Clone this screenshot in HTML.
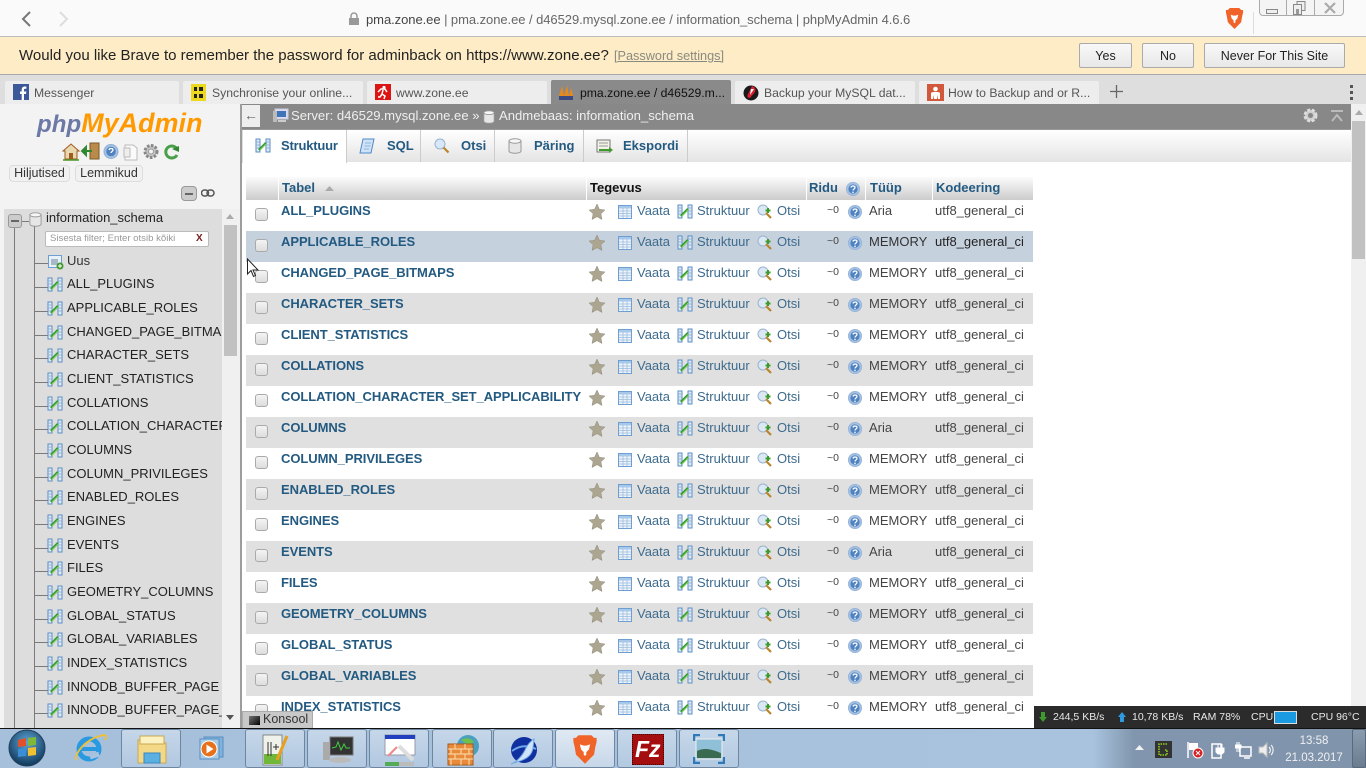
<!DOCTYPE html>
<html><head><meta charset="utf-8"><title>phpMyAdmin</title>
<style>
html,body{margin:0;padding:0;width:1366px;height:768px;overflow:hidden;background:#fff;font-family:"Liberation Sans",sans-serif;font-size:13px;color:#444}
div,span,a,svg{position:absolute;white-space:nowrap;box-sizing:border-box}
.tab{top:81px;height:23px;background:#ededed;border-radius:2px 2px 0 0;color:#555;font-size:12.2px;line-height:23px}
.tab span{left:29px;top:0}
.tab svg{left:8px;top:3px}
.btn{top:43px;height:25px;border:1px solid #aaa;border-radius:2px;background:linear-gradient(#f8f8f8,#e8e8e8);text-align:center;line-height:24px;font-size:12.5px;color:#222}
.nav{left:67px;color:#222;font-size:13px;line-height:16px;width:155px;overflow:hidden;height:17px;margin-top:1px}
.mt{top:130px;height:32px;color:#235a81;font-weight:bold;font-size:13px;line-height:32px;border-right:1px solid #ccc}
.mt span{top:0}
.mt svg{top:8px}
.h{top:177px;height:23px;background:linear-gradient(#fbfbfb,#ccc);color:#235a81;font-weight:bold;line-height:21px;font-size:13px}
.r{left:246px;width:787px;height:31px;overflow:hidden}
.o{background:#e0e0e0}
.n{left:35px;top:2px;color:#235a81;font-weight:bold;font-size:13px;letter-spacing:-.06px;line-height:17px}
.a{top:2px;color:#3d6b8d;line-height:17px;font-size:13px;}
.g{top:2px;color:#444;line-height:17px;font-size:13px}
.ck{left:9px;top:8px;width:13px;height:13px;border:1px solid #aaa;border-radius:3px;background:linear-gradient(#f4f4f4,#ddd)}
.bar{top:729px;height:39px;width:60px;border:1px solid #6f86a0;border-radius:3px;background:linear-gradient(rgba(255,255,255,.35),rgba(255,255,255,.12))}
.bar svg{left:14px;top:4px}
.st{top:711px;color:#e8e8e8;font-size:10.5px;line-height:13px}
.ln{background:#7a7a7a}
</style></head><body>
<svg width="0" height="0" style="left:0;top:0">
<defs>
<symbol id="str" viewBox="0 0 16 16"><path d="M1 1h4v13H1zM11 1h4v13h-4z" fill="#dfeaf6" stroke="#5b8fc6"/><path d="M1 4h4M1 7h4M1 10h4M11 4h4M11 7h4M11 10h4" stroke="#8fb2d8"/><path d="M4 12l7-7" stroke="#2e9a2e" stroke-width="2.4"/><path d="M5 12l6-6" stroke="#8ad05a" stroke-width="1"/></symbol>
<symbol id="star" viewBox="0 0 16 16"><path d="M8 0l2.4 5.3 5.6.7-4.1 3.8 1.1 5.7L8 12.7 3 15.500l1.100-5.700L0 6l5.600-.7z" fill="#aca691" stroke="#8f8a78" stroke-width=".5"/></symbol>
<symbol id="tbl" viewBox="0 0 14 14"><rect x=".5" y=".5" width="13" height="13" fill="#eef4fb" stroke="#6f9fd2"/><rect x="1" y="1" width="12" height="2.500" fill="#a8c8ea"/><path d="M1 6h12M1 8.500h12M1 11h12M5 3v10M9 3v10" stroke="#9dbcdc" stroke-width=".8"/></symbol>
<symbol id="srch" viewBox="0 0 16 16"><circle cx="6" cy="6" r="5" fill="#dce9f5" stroke="#99b3cc"/><path d="M9 9l5 5" stroke="#b8862f" stroke-width="2.200"/><path d="M8.500 6.500h5M11 4v5" stroke="#3f9a2e" stroke-width="2"/></symbol>
<symbol id="help" viewBox="0 0 14 14"><circle cx="7" cy="7" r="6.700" fill="#a5c0e0" stroke="#8fb0d8" stroke-width=".6"/><circle cx="7" cy="7" r="4.600" fill="#4f82c0"/><path d="M5 5.500c.3-2 4-2 4 0 0 1.500-2 1.500-2 3" fill="none" stroke="#fff" stroke-width="1.300"/><circle cx="7" cy="10.300" r=".8" fill="#fff"/></symbol>
<symbol id="db" viewBox="0 0 14 16"><path d="M1 3v10c0 3 12 3 12 0V3z" fill="#e6e6e6" stroke="#999"/><ellipse cx="7" cy="3" rx="6" ry="2.200" fill="#f7f7f7" stroke="#999"/></symbol>
<symbol id="brave" viewBox="0 0 20 24"><path d="M5 1h10l2 2 2 0 0 3-1 4-1 6-7 7-7-7-1-6-1-4 0-3 2 0z" fill="#f0642a"/><path d="M6 8l3 1h2l3-1-1 4-2 2v2l-1 1-1-1v-2l-2-2z" fill="#fff"/></symbol>
</defs></svg>

<!-- browser top -->
<div style="left:0;top:0;width:1366px;height:36px;background:#fafafa"></div>
<div style="left:0;top:36px;width:1366px;height:1px;background:#bbb"></div>
<svg style="left:19px;top:10px" width="14" height="18"><path d="M11 2L4 9l7 7" fill="none" stroke="#777" stroke-width="2"/></svg>
<svg style="left:57px;top:10px" width="14" height="18"><path d="M3 2l7 7-7 7" fill="none" stroke="#ddd" stroke-width="2"/></svg>
<svg style="left:348px;top:12px" width="12" height="14"><path d="M3 6V4a3 3 0 016 0v2" fill="none" stroke="#999" stroke-width="1.500"/><rect x="1" y="6" width="10" height="7" fill="#999"/></svg>
<div style="left:366px;top:12px;font-size:13px;line-height:16px;color:#666;letter-spacing:-.06px"><span style="position:static;color:#444">pma.zone.ee</span> | pma.zone.ee / d46529.mysql.zone.ee / information_schema | phpMyAdmin 4.6.6</div>
<svg style="left:1225px;top:7px" width="19" height="23"><use href="#brave"/></svg>
<div style="left:1253px;top:12px;width:1px;height:22px;background:#ddd"></div>
<div style="left:1259px;top:-2px;width:85px;height:18px;border:1px solid #aaa;border-radius:0 0 4px 4px;background:#f4f4f4"></div>
<div style="left:1286px;top:0;width:1px;height:16px;background:#aaa"></div>
<div style="left:1314px;top:0;width:1px;height:16px;background:#aaa"></div>
<div style="left:1266px;top:9px;width:12px;height:5px;border:1px solid #888;background:#eee"></div>
<svg style="left:1292px;top:1px" width="16" height="14"><rect x="5" y=".5" width="8" height="9" fill="#eee" stroke="#888"/><rect x="1.500" y="3.500" width="8" height="10" fill="#eee" stroke="#888"/><rect x="4" y="8" width="3" height="5" fill="#999"/></svg>
<svg style="left:1323px;top:2px" width="14" height="12"><path d="M2 1l10 10M12 1L2 11" stroke="#aaa" stroke-width="2.200"/></svg>

<!-- infobar -->
<div style="left:0;top:37px;width:1366px;height:37px;background:#fdecc6"></div>
<div style="left:0;top:74px;width:1366px;height:1px;background:#a9a9a9"></div>
<div style="left:19px;top:47px;font-size:15.03px;line-height:18px;color:#222">Would you like Brave to remember the password for adminback on https://www.zone.ee?</div>
<div style="left:614px;top:48px;font-size:12.7px;line-height:17px;color:#8a8a80;text-decoration:underline">[Password settings]</div>
<div class="btn" style="left:1079px;width:53px">Yes</div>
<div class="btn" style="left:1142px;width:52px">No</div>
<div class="btn" style="left:1204px;width:141px">Never For This Site</div>

<!-- tabs -->
<div style="left:0;top:75px;width:1366px;height:29px;background:#dedede"></div>
<div class="tab" style="left:5px;width:174px"><svg width="16" height="16"><rect width="16" height="16" fill="#3b5998"/><path d="M11 16V10h2l.3-2.500H11V6c0-.8.3-1.200 1.200-1.200h1.200V2.600C13 2.500 12.400 2.500 11.800 2.500 10 2.500 8.700 3.600 8.700 5.700v1.800H7V10h1.700v6z" fill="#fff"/></svg><span style="top:1px">Messenger</span></div>
<div class="tab" style="left:183px;width:180px"><svg width="16" height="18"><rect width="15" height="17" fill="#ecd81c"/><path d="M3 3h3v4H3zM8 3h4v4H8zM3 10h3v4H3zM8 10h4v4H8z" fill="#222"/></svg><span style="top:1px">Synchronise your online...</span></div>
<div class="tab" style="left:367px;width:180px"><svg width="16" height="16"><rect width="16" height="16" fill="#dc1414"/><circle cx="9" cy="3.500" r="1.600" fill="#fff"/><path d="M3 8l3-3h4l2 3M8 6l-1 4 3 2-1 3M7 10l-2 3H3" fill="none" stroke="#fff" stroke-width="1.500"/></svg><span style="top:1px">www.zone.ee</span></div>
<div style="left:551px;top:80px;width:180px;height:24px;background:#8a8a8a;border-radius:2px 2px 0 0"></div>
<svg style="left:558px;top:84px" width="16" height="16"><path d="M1 12L4 2l2 10zM6 12l3-11 2 11zM11 12l2-8 2 8z" fill="#e8891b"/><rect x="1" y="12" width="14" height="4" fill="#3b4a80"/></svg>
<div style="left:580px;top:85px;font-size:12.2px;line-height:17px;color:#111">pma.zone.ee / d46529.m...</div>
<div class="tab" style="left:735px;width:180px"><svg width="16" height="18"><circle cx="8" cy="9" r="7.500" fill="#1a1a1a"/><path d="M9 2c3 1 4 3 3 6l-5 6c-3 0-3-2-2-4z" fill="#d8202c"/><path d="M8 5l3 0-4 6z" fill="#fff"/></svg><span style="top:1px">Backup your MySQL dat...</span></div>
<div class="tab" style="left:919px;width:180px"><svg width="17" height="17"><rect width="17" height="17" fill="#d2583c"/><circle cx="8.500" cy="5" r="2.300" fill="#fff"/><path d="M4 15V9.500C4 8 6 8 8.500 8s4.500 0 4.500 1.500V15h-2v-4l-1 4H7l-1-4v4z" fill="#fff"/></svg><span style="top:1px">How to Backup and or R...</span></div>
<svg style="left:1110px;top:85px" width="13" height="13"><path d="M6.500 0v13M0 6.500h13" stroke="#666" stroke-width="1.300"/></svg>
<div style="left:1350px;top:85px;width:3px;height:3px;background:#555"></div>
<div style="left:1350px;top:91px;width:3px;height:3px;background:#555"></div>
<div style="left:1350px;top:97px;width:3px;height:3px;background:#555"></div>

<!-- sidebar -->
<div style="left:0;top:104px;width:241px;height:624px;background:#f3f3f3"></div>
<div style="left:240px;top:104px;width:2px;height:624px;background:#9d9d9d"></div>
<div style="left:37px;top:105px;font-family:'Liberation Sans',sans-serif;font-weight:bold;font-style:italic;font-size:26.8px;line-height:36px;letter-spacing:.1px;color:#ff9900"><span style="position:static;color:#6c78a5;font-size:24px">php</span>MyAdmin</div>
<svg style="left:62px;top:142px" width="120" height="19">
<path d="M1 9l8-7 8 7h-2v8H3V9z" fill="#e8d8b0" stroke="#a05a20"/><rect x="7" y="11" width="4" height="6" fill="#a05a20"/><path d="M1 18h16" stroke="#4a9a2a" stroke-width="1.500"/>
<rect x="28" y="1" width="9" height="16" fill="#b98a4a" stroke="#7a5a2a"/><path d="M21 9h9M24 5v8l-4-4z" stroke="#2f8a2f" stroke-width="2"/>
<circle cx="49" cy="9.500" r="7" fill="#a5c0e0" stroke="#8fb0d8"/><circle cx="49" cy="9.500" r="4.800" fill="#4f82c0"/><path d="M47 8c.3-2 4-2 4 0 0 1.500-2 1.500-2 3" fill="none" stroke="#fff" stroke-width="1.300"/>
<path d="M63 3h8l4 3v12H63z" fill="#fafafa" stroke="#bbb"/><rect x="62" y="6" width="6" height="9" fill="#eee" stroke="#bbb"/>
<circle cx="89" cy="9.500" r="6" fill="#c4c4c4" stroke="#888" stroke-width="3" stroke-dasharray="2.500 1.500"/><circle cx="89" cy="9.500" r="2.500" fill="#f3f3f3" stroke="#999"/>
<path d="M115 7a6 6 0 10 0 6" fill="none" stroke="#4aa04a" stroke-width="3"/><path d="M110 7l7-3 0 6z" fill="#2f8a2f"/>
</svg>
<div style="left:9px;top:165px;width:61px;height:17px;border:1px solid #ddd;border-radius:4px;background:#f1f1f1;color:#333;font-size:12.500px;line-height:15px;text-align:center">Hiljutised</div>
<div style="left:75px;top:165px;width:68px;height:17px;border:1px solid #ddd;border-radius:4px;background:#f1f1f1;color:#333;font-size:12.500px;line-height:15px;text-align:center">Lemmikud</div>
<div style="left:181px;top:186px;width:16px;height:15px;border:1px solid #999;border-radius:4px;background:#ccc"></div>
<div style="left:185px;top:193px;width:8px;height:2px;background:#666"></div>
<svg style="left:201px;top:189px" width="14" height="9"><rect x=".5" y="1" width="7" height="6" rx="3" fill="none" stroke="#555" stroke-width="1.500"/><rect x="6" y="1" width="7" height="6" rx="3" fill="none" stroke="#555" stroke-width="1.500"/></svg>

<!-- tree -->
<div style="left:4px;top:209px;width:218px;height:519px;background:#dddddd;overflow:hidden"></div>
<div class="ln" style="left:14px;top:226px;width:1px;height:502px"></div>
<div class="ln" style="left:34px;top:226px;width:1px;height:502px"></div>
<div style="left:8px;top:214px;width:14px;height:14px;border:1px solid #999;border-radius:3px;background:#ccc"></div>
<div style="left:11px;top:220px;width:8px;height:2px;background:#666"></div>
<div class="ln" style="left:22px;top:221px;width:7px;height:1px"></div>
<svg style="left:29px;top:212px" width="13" height="15"><use href="#db"/></svg>
<div style="left:46px;top:209px;color:#222;font-size:13px;line-height:17px">information_schema</div>
<div style="left:45px;top:231px;width:164px;height:16px;background:#fff;border:1px solid #bbb;border-radius:2px"></div>
<div style="left:50px;top:232px;font-size:9.6px;line-height:14px;color:#999">Sisesta filter; Enter otsib kõiki</div>
<div style="left:196px;top:232px;font-size:10px;line-height:14px;color:#7a1a1a;font-weight:bold">X</div>
<div class="ln" style="left:35px;top:263px;width:13px;height:1px"></div>
<svg style="left:48px;top:254px" width="16" height="16"><rect x=".5" y="1.500" width="13" height="12" fill="#e8f0f8" stroke="#6f9fd2"/><rect x="3" y="5" width="7" height="6" fill="#a8b8c8"/><circle cx="12" cy="12" r="3.500" fill="#3f9a2e"/><path d="M10 12h4M12 10v4" stroke="#fff"/></svg>
<div class="nav" style="top:252px;color:#333">Uus</div>

<div class="ln" style="left:35px;top:287px;width:13px;height:1px"></div><svg style="left:47px;top:277px" width="16" height="16"><use href="#str"/></svg><div class="nav" style="top:275px">ALL_PLUGINS</div>
<div class="ln" style="left:35px;top:311px;width:13px;height:1px"></div><svg style="left:47px;top:301px" width="16" height="16"><use href="#str"/></svg><div class="nav" style="top:299px">APPLICABLE_ROLES</div>
<div class="ln" style="left:35px;top:335px;width:13px;height:1px"></div><svg style="left:47px;top:325px" width="16" height="16"><use href="#str"/></svg><div class="nav" style="top:323px">CHANGED_PAGE_BITMAPS</div>
<div class="ln" style="left:35px;top:358px;width:13px;height:1px"></div><svg style="left:47px;top:348px" width="16" height="16"><use href="#str"/></svg><div class="nav" style="top:346px">CHARACTER_SETS</div>
<div class="ln" style="left:35px;top:382px;width:13px;height:1px"></div><svg style="left:47px;top:372px" width="16" height="16"><use href="#str"/></svg><div class="nav" style="top:370px">CLIENT_STATISTICS</div>
<div class="ln" style="left:35px;top:406px;width:13px;height:1px"></div><svg style="left:47px;top:396px" width="16" height="16"><use href="#str"/></svg><div class="nav" style="top:394px">COLLATIONS</div>
<div class="ln" style="left:35px;top:429px;width:13px;height:1px"></div><svg style="left:47px;top:419px" width="16" height="16"><use href="#str"/></svg><div class="nav" style="top:417px">COLLATION_CHARACTER_SET</div>
<div class="ln" style="left:35px;top:453px;width:13px;height:1px"></div><svg style="left:47px;top:443px" width="16" height="16"><use href="#str"/></svg><div class="nav" style="top:441px">COLUMNS</div>
<div class="ln" style="left:35px;top:477px;width:13px;height:1px"></div><svg style="left:47px;top:467px" width="16" height="16"><use href="#str"/></svg><div class="nav" style="top:465px">COLUMN_PRIVILEGES</div>
<div class="ln" style="left:35px;top:500px;width:13px;height:1px"></div><svg style="left:47px;top:490px" width="16" height="16"><use href="#str"/></svg><div class="nav" style="top:488px">ENABLED_ROLES</div>
<div class="ln" style="left:35px;top:524px;width:13px;height:1px"></div><svg style="left:47px;top:514px" width="16" height="16"><use href="#str"/></svg><div class="nav" style="top:512px">ENGINES</div>
<div class="ln" style="left:35px;top:548px;width:13px;height:1px"></div><svg style="left:47px;top:538px" width="16" height="16"><use href="#str"/></svg><div class="nav" style="top:536px">EVENTS</div>
<div class="ln" style="left:35px;top:571px;width:13px;height:1px"></div><svg style="left:47px;top:561px" width="16" height="16"><use href="#str"/></svg><div class="nav" style="top:559px">FILES</div>
<div class="ln" style="left:35px;top:595px;width:13px;height:1px"></div><svg style="left:47px;top:585px" width="16" height="16"><use href="#str"/></svg><div class="nav" style="top:583px">GEOMETRY_COLUMNS</div>
<div class="ln" style="left:35px;top:619px;width:13px;height:1px"></div><svg style="left:47px;top:609px" width="16" height="16"><use href="#str"/></svg><div class="nav" style="top:607px">GLOBAL_STATUS</div>
<div class="ln" style="left:35px;top:642px;width:13px;height:1px"></div><svg style="left:47px;top:632px" width="16" height="16"><use href="#str"/></svg><div class="nav" style="top:630px">GLOBAL_VARIABLES</div>
<div class="ln" style="left:35px;top:666px;width:13px;height:1px"></div><svg style="left:47px;top:656px" width="16" height="16"><use href="#str"/></svg><div class="nav" style="top:654px">INDEX_STATISTICS</div>
<div class="ln" style="left:35px;top:690px;width:13px;height:1px"></div><svg style="left:47px;top:680px" width="16" height="16"><use href="#str"/></svg><div class="nav" style="top:678px">INNODB_BUFFER_PAGE</div>
<div class="ln" style="left:35px;top:713px;width:13px;height:1px"></div><svg style="left:47px;top:703px" width="16" height="16"><use href="#str"/></svg><div class="nav" style="top:701px">INNODB_BUFFER_PAGE_LRU</div>

<div style="left:222px;top:209px;width:18px;height:519px;background:#f0f0f0"></div>
<div style="left:224px;top:225px;width:13px;height:131px;background:#c1c1c1"></div>
<svg style="left:225px;top:214px" width="10" height="6"><path d="M5 0l4 5H1z" fill="#aaa"/></svg>
<svg style="left:225px;top:715px" width="10" height="6"><path d="M5 5L1 0h8z" fill="#555"/></svg>

<!-- top breadcrumb -->
<div style="left:242px;top:104px;width:1109px;height:26px;background:#888;border-bottom:1px solid #999"></div>
<div style="left:242px;top:105px;width:18px;height:22px;background:#eee;color:#666;font-size:14px;line-height:21px;text-align:center">←</div>
<svg style="left:273px;top:108px" width="16" height="15"><rect x="2" y="1" width="13" height="10" fill="#dde" stroke="#ccd"/><rect x="4" y="3" width="9" height="6" fill="#3f74b8"/><rect x="0" y="3" width="4" height="11" fill="#bbb"/><rect x="5" y="12" width="8" height="2" fill="#ccc"/></svg>
<div style="left:291px;top:108px;color:#efefef;font-size:13.1px;line-height:16px">Server: d46529.mysql.zone.ee »</div>
<svg style="left:483px;top:110px" width="12" height="14"><use href="#db"/></svg>
<div style="left:499px;top:108px;color:#efefef;font-size:13.1px;line-height:16px">Andmebaas: information_schema</div>
<svg style="left:1302px;top:107px" width="17" height="17"><circle cx="8.500" cy="8.500" r="5.500" fill="#ccc" stroke="#ddd" stroke-width="3" stroke-dasharray="3 1.500"/><circle cx="8.500" cy="8.500" r="2.500" fill="#888"/></svg>
<svg style="left:1330px;top:110px" width="14" height="12"><path d="M1 1h12" stroke="#bbb" stroke-width="2"/><path d="M2 11l5-6 5 6" fill="none" stroke="#bbb" stroke-width="2"/></svg>

<!-- menu -->
<div style="left:242px;top:130px;width:1109px;height:32px;background:linear-gradient(#fff,#e4e4e4)"></div>
<div class="mt" style="left:242px;width:105px;height:33px;background:#fff;border-left:1px solid #ddd"><svg style="left:12px" width="16" height="16"><use href="#str"/></svg><span style="left:38px;letter-spacing:-.2px">Struktuur</span></div>
<div class="mt" style="left:347px;width:74px"><svg style="left:12px" width="16" height="16"><path d="M4 1h11l-3 14H1z" fill="#cfe2f6" stroke="#4f8ac6"/><path d="M6 5h6M5.500 8h6M5 11h5" stroke="#8fb6de"/></svg><span style="left:40px">SQL</span></div>
<div class="mt" style="left:421px;width:74px"><svg style="left:13px" width="16" height="16"><circle cx="6" cy="6" r="5" fill="#d8e8f8" stroke="#99b3cc"/><path d="M9.500 9.500l5 5" stroke="#b8862f" stroke-width="2.200"/></svg><span style="left:40px">Otsi</span></div>
<div class="mt" style="left:495px;width:89px"><svg style="left:13px" width="14" height="16"><use href="#db"/></svg><span style="left:39px">Päring</span></div>
<div class="mt" style="left:584px;width:104px"><svg style="left:12px" width="17" height="16"><rect x="1" y="2" width="13" height="12" fill="#f2f2e8" stroke="#777"/><path d="M3 5h9M3 8h9" stroke="#999"/><path d="M3 12h10" stroke="#3f9a2e" stroke-width="2"/><path d="M13 9l4 3-4 3z" fill="#3f9a2e"/></svg><span style="left:39px">Ekspordi</span></div>

<!-- table header -->
<div class="h" style="left:246px;width:32px"></div>
<div class="h" style="left:279px;width:307px"><span style="left:3px;top:0">Tabel</span><svg style="left:46px;top:9px" width="9" height="6"><path d="M4.500 0L9 5H0z" fill="#aaa"/></svg></div>
<div class="h" style="left:587px;width:219px;color:#111"><span style="left:3px;top:0">Tegevus</span></div>
<div class="h" style="left:807px;width:58px"><span style="left:2px;top:0">Ridu</span><svg style="left:39px;top:5px" width="14" height="14"><use href="#help"/></svg></div>
<div class="h" style="left:866px;width:66px"><span style="left:4px;top:0">Tüüp</span></div>
<div class="h" style="left:933px;width:100px"><span style="left:3px;top:0">Kodeering</span></div>

<!-- rows -->
<div class="r" style="top:200px"><div class="ck"></div><span class="n">ALL_PLUGINS</span><svg style="left:343px;top:4px" width="16" height="16"><use href="#star"/></svg><svg style="left:372px;top:5px" width="14" height="14"><use href="#tbl"/></svg><span class="a" style="left:391px">Vaata</span><svg style="left:431px;top:4px" width="16" height="16"><use href="#str"/></svg><span class="a" style="left:451px">Struktuur</span><svg style="left:511px;top:4px" width="16" height="16"><use href="#srch"/></svg><span class="a" style="left:531px">Otsi</span><span class="g" style="left:581px;font-size:10.500px">~0</span><svg style="left:602px;top:5px" width="14" height="14"><use href="#help"/></svg><span class="g" style="left:623px">Aria</span><span class="g" style="left:689px">utf8_general_ci</span></div>
<div class="r" style="top:231px;background:#c6d1de"><div class="ck"></div><span class="n">APPLICABLE_ROLES</span><svg style="left:343px;top:4px" width="16" height="16"><use href="#star"/></svg><svg style="left:372px;top:5px" width="14" height="14"><use href="#tbl"/></svg><span class="a" style="left:391px">Vaata</span><svg style="left:431px;top:4px" width="16" height="16"><use href="#str"/></svg><span class="a" style="left:451px">Struktuur</span><svg style="left:511px;top:4px" width="16" height="16"><use href="#srch"/></svg><span class="a" style="left:531px">Otsi</span><span class="g" style="left:581px;font-size:10.500px">~0</span><svg style="left:602px;top:5px" width="14" height="14"><use href="#help"/></svg><span class="g" style="left:623px;color:#333">MEMORY</span><span class="g" style="left:689px;color:#222">utf8_general_ci</span></div>
<div class="r" style="top:262px"><div class="ck"></div><span class="n">CHANGED_PAGE_BITMAPS</span><svg style="left:343px;top:4px" width="16" height="16"><use href="#star"/></svg><svg style="left:372px;top:5px" width="14" height="14"><use href="#tbl"/></svg><span class="a" style="left:391px">Vaata</span><svg style="left:431px;top:4px" width="16" height="16"><use href="#str"/></svg><span class="a" style="left:451px">Struktuur</span><svg style="left:511px;top:4px" width="16" height="16"><use href="#srch"/></svg><span class="a" style="left:531px">Otsi</span><span class="g" style="left:581px;font-size:10.500px">~0</span><svg style="left:602px;top:5px" width="14" height="14"><use href="#help"/></svg><span class="g" style="left:623px">MEMORY</span><span class="g" style="left:689px">utf8_general_ci</span></div>
<div class="r o" style="top:293px"><div class="ck"></div><span class="n">CHARACTER_SETS</span><svg style="left:343px;top:4px" width="16" height="16"><use href="#star"/></svg><svg style="left:372px;top:5px" width="14" height="14"><use href="#tbl"/></svg><span class="a" style="left:391px">Vaata</span><svg style="left:431px;top:4px" width="16" height="16"><use href="#str"/></svg><span class="a" style="left:451px">Struktuur</span><svg style="left:511px;top:4px" width="16" height="16"><use href="#srch"/></svg><span class="a" style="left:531px">Otsi</span><span class="g" style="left:581px;font-size:10.500px">~0</span><svg style="left:602px;top:5px" width="14" height="14"><use href="#help"/></svg><span class="g" style="left:623px">MEMORY</span><span class="g" style="left:689px">utf8_general_ci</span></div>
<div class="r" style="top:324px"><div class="ck"></div><span class="n">CLIENT_STATISTICS</span><svg style="left:343px;top:4px" width="16" height="16"><use href="#star"/></svg><svg style="left:372px;top:5px" width="14" height="14"><use href="#tbl"/></svg><span class="a" style="left:391px">Vaata</span><svg style="left:431px;top:4px" width="16" height="16"><use href="#str"/></svg><span class="a" style="left:451px">Struktuur</span><svg style="left:511px;top:4px" width="16" height="16"><use href="#srch"/></svg><span class="a" style="left:531px">Otsi</span><span class="g" style="left:581px;font-size:10.500px">~0</span><svg style="left:602px;top:5px" width="14" height="14"><use href="#help"/></svg><span class="g" style="left:623px">MEMORY</span><span class="g" style="left:689px">utf8_general_ci</span></div>
<div class="r o" style="top:355px"><div class="ck"></div><span class="n">COLLATIONS</span><svg style="left:343px;top:4px" width="16" height="16"><use href="#star"/></svg><svg style="left:372px;top:5px" width="14" height="14"><use href="#tbl"/></svg><span class="a" style="left:391px">Vaata</span><svg style="left:431px;top:4px" width="16" height="16"><use href="#str"/></svg><span class="a" style="left:451px">Struktuur</span><svg style="left:511px;top:4px" width="16" height="16"><use href="#srch"/></svg><span class="a" style="left:531px">Otsi</span><span class="g" style="left:581px;font-size:10.500px">~0</span><svg style="left:602px;top:5px" width="14" height="14"><use href="#help"/></svg><span class="g" style="left:623px">MEMORY</span><span class="g" style="left:689px">utf8_general_ci</span></div>
<div class="r" style="top:386px"><div class="ck"></div><span class="n">COLLATION_CHARACTER_SET_APPLICABILITY</span><svg style="left:343px;top:4px" width="16" height="16"><use href="#star"/></svg><svg style="left:372px;top:5px" width="14" height="14"><use href="#tbl"/></svg><span class="a" style="left:391px">Vaata</span><svg style="left:431px;top:4px" width="16" height="16"><use href="#str"/></svg><span class="a" style="left:451px">Struktuur</span><svg style="left:511px;top:4px" width="16" height="16"><use href="#srch"/></svg><span class="a" style="left:531px">Otsi</span><span class="g" style="left:581px;font-size:10.500px">~0</span><svg style="left:602px;top:5px" width="14" height="14"><use href="#help"/></svg><span class="g" style="left:623px">MEMORY</span><span class="g" style="left:689px">utf8_general_ci</span></div>
<div class="r o" style="top:417px"><div class="ck"></div><span class="n">COLUMNS</span><svg style="left:343px;top:4px" width="16" height="16"><use href="#star"/></svg><svg style="left:372px;top:5px" width="14" height="14"><use href="#tbl"/></svg><span class="a" style="left:391px">Vaata</span><svg style="left:431px;top:4px" width="16" height="16"><use href="#str"/></svg><span class="a" style="left:451px">Struktuur</span><svg style="left:511px;top:4px" width="16" height="16"><use href="#srch"/></svg><span class="a" style="left:531px">Otsi</span><span class="g" style="left:581px;font-size:10.500px">~0</span><svg style="left:602px;top:5px" width="14" height="14"><use href="#help"/></svg><span class="g" style="left:623px">Aria</span><span class="g" style="left:689px">utf8_general_ci</span></div>
<div class="r" style="top:448px"><div class="ck"></div><span class="n">COLUMN_PRIVILEGES</span><svg style="left:343px;top:4px" width="16" height="16"><use href="#star"/></svg><svg style="left:372px;top:5px" width="14" height="14"><use href="#tbl"/></svg><span class="a" style="left:391px">Vaata</span><svg style="left:431px;top:4px" width="16" height="16"><use href="#str"/></svg><span class="a" style="left:451px">Struktuur</span><svg style="left:511px;top:4px" width="16" height="16"><use href="#srch"/></svg><span class="a" style="left:531px">Otsi</span><span class="g" style="left:581px;font-size:10.500px">~0</span><svg style="left:602px;top:5px" width="14" height="14"><use href="#help"/></svg><span class="g" style="left:623px">MEMORY</span><span class="g" style="left:689px">utf8_general_ci</span></div>
<div class="r o" style="top:479px"><div class="ck"></div><span class="n">ENABLED_ROLES</span><svg style="left:343px;top:4px" width="16" height="16"><use href="#star"/></svg><svg style="left:372px;top:5px" width="14" height="14"><use href="#tbl"/></svg><span class="a" style="left:391px">Vaata</span><svg style="left:431px;top:4px" width="16" height="16"><use href="#str"/></svg><span class="a" style="left:451px">Struktuur</span><svg style="left:511px;top:4px" width="16" height="16"><use href="#srch"/></svg><span class="a" style="left:531px">Otsi</span><span class="g" style="left:581px;font-size:10.500px">~0</span><svg style="left:602px;top:5px" width="14" height="14"><use href="#help"/></svg><span class="g" style="left:623px">MEMORY</span><span class="g" style="left:689px">utf8_general_ci</span></div>
<div class="r" style="top:510px"><div class="ck"></div><span class="n">ENGINES</span><svg style="left:343px;top:4px" width="16" height="16"><use href="#star"/></svg><svg style="left:372px;top:5px" width="14" height="14"><use href="#tbl"/></svg><span class="a" style="left:391px">Vaata</span><svg style="left:431px;top:4px" width="16" height="16"><use href="#str"/></svg><span class="a" style="left:451px">Struktuur</span><svg style="left:511px;top:4px" width="16" height="16"><use href="#srch"/></svg><span class="a" style="left:531px">Otsi</span><span class="g" style="left:581px;font-size:10.500px">~0</span><svg style="left:602px;top:5px" width="14" height="14"><use href="#help"/></svg><span class="g" style="left:623px">MEMORY</span><span class="g" style="left:689px">utf8_general_ci</span></div>
<div class="r o" style="top:541px"><div class="ck"></div><span class="n">EVENTS</span><svg style="left:343px;top:4px" width="16" height="16"><use href="#star"/></svg><svg style="left:372px;top:5px" width="14" height="14"><use href="#tbl"/></svg><span class="a" style="left:391px">Vaata</span><svg style="left:431px;top:4px" width="16" height="16"><use href="#str"/></svg><span class="a" style="left:451px">Struktuur</span><svg style="left:511px;top:4px" width="16" height="16"><use href="#srch"/></svg><span class="a" style="left:531px">Otsi</span><span class="g" style="left:581px;font-size:10.500px">~0</span><svg style="left:602px;top:5px" width="14" height="14"><use href="#help"/></svg><span class="g" style="left:623px">Aria</span><span class="g" style="left:689px">utf8_general_ci</span></div>
<div class="r" style="top:572px"><div class="ck"></div><span class="n">FILES</span><svg style="left:343px;top:4px" width="16" height="16"><use href="#star"/></svg><svg style="left:372px;top:5px" width="14" height="14"><use href="#tbl"/></svg><span class="a" style="left:391px">Vaata</span><svg style="left:431px;top:4px" width="16" height="16"><use href="#str"/></svg><span class="a" style="left:451px">Struktuur</span><svg style="left:511px;top:4px" width="16" height="16"><use href="#srch"/></svg><span class="a" style="left:531px">Otsi</span><span class="g" style="left:581px;font-size:10.500px">~0</span><svg style="left:602px;top:5px" width="14" height="14"><use href="#help"/></svg><span class="g" style="left:623px">MEMORY</span><span class="g" style="left:689px">utf8_general_ci</span></div>
<div class="r o" style="top:603px"><div class="ck"></div><span class="n">GEOMETRY_COLUMNS</span><svg style="left:343px;top:4px" width="16" height="16"><use href="#star"/></svg><svg style="left:372px;top:5px" width="14" height="14"><use href="#tbl"/></svg><span class="a" style="left:391px">Vaata</span><svg style="left:431px;top:4px" width="16" height="16"><use href="#str"/></svg><span class="a" style="left:451px">Struktuur</span><svg style="left:511px;top:4px" width="16" height="16"><use href="#srch"/></svg><span class="a" style="left:531px">Otsi</span><span class="g" style="left:581px;font-size:10.500px">~0</span><svg style="left:602px;top:5px" width="14" height="14"><use href="#help"/></svg><span class="g" style="left:623px">MEMORY</span><span class="g" style="left:689px">utf8_general_ci</span></div>
<div class="r" style="top:634px"><div class="ck"></div><span class="n">GLOBAL_STATUS</span><svg style="left:343px;top:4px" width="16" height="16"><use href="#star"/></svg><svg style="left:372px;top:5px" width="14" height="14"><use href="#tbl"/></svg><span class="a" style="left:391px">Vaata</span><svg style="left:431px;top:4px" width="16" height="16"><use href="#str"/></svg><span class="a" style="left:451px">Struktuur</span><svg style="left:511px;top:4px" width="16" height="16"><use href="#srch"/></svg><span class="a" style="left:531px">Otsi</span><span class="g" style="left:581px;font-size:10.500px">~0</span><svg style="left:602px;top:5px" width="14" height="14"><use href="#help"/></svg><span class="g" style="left:623px">MEMORY</span><span class="g" style="left:689px">utf8_general_ci</span></div>
<div class="r o" style="top:665px"><div class="ck"></div><span class="n">GLOBAL_VARIABLES</span><svg style="left:343px;top:4px" width="16" height="16"><use href="#star"/></svg><svg style="left:372px;top:5px" width="14" height="14"><use href="#tbl"/></svg><span class="a" style="left:391px">Vaata</span><svg style="left:431px;top:4px" width="16" height="16"><use href="#str"/></svg><span class="a" style="left:451px">Struktuur</span><svg style="left:511px;top:4px" width="16" height="16"><use href="#srch"/></svg><span class="a" style="left:531px">Otsi</span><span class="g" style="left:581px;font-size:10.500px">~0</span><svg style="left:602px;top:5px" width="14" height="14"><use href="#help"/></svg><span class="g" style="left:623px">MEMORY</span><span class="g" style="left:689px">utf8_general_ci</span></div>
<div class="r" style="top:696px"><div class="ck"></div><span class="n">INDEX_STATISTICS</span><svg style="left:343px;top:4px" width="16" height="16"><use href="#star"/></svg><svg style="left:372px;top:5px" width="14" height="14"><use href="#tbl"/></svg><span class="a" style="left:391px">Vaata</span><svg style="left:431px;top:4px" width="16" height="16"><use href="#str"/></svg><span class="a" style="left:451px">Struktuur</span><svg style="left:511px;top:4px" width="16" height="16"><use href="#srch"/></svg><span class="a" style="left:531px">Otsi</span><span class="g" style="left:581px;font-size:10.500px">~0</span><svg style="left:602px;top:5px" width="14" height="14"><use href="#help"/></svg><span class="g" style="left:623px">MEMORY</span><span class="g" style="left:689px">utf8_general_ci</span></div>

<!-- mouse cursor -->
<svg style="left:246px;top:258px" width="14" height="20"><path d="M1.500 1v15l3.500-3.500 2.500 6 2-1-2.500-5.500 5 0z" fill="#fff" stroke="#222"/></svg>

<!-- konsool -->
<div style="left:242px;top:711px;width:71px;height:17px;background:#c8c8c8;border:1px solid #aaa;border-bottom:0;color:#333;font-size:12.500px;line-height:15px"><span style="left:20px;top:0">Konsool</span><span style="left:6px;top:4px;width:11px;height:9px;background:linear-gradient(135deg,#777,#000)"></span></div>

<!-- page scrollbar -->
<div style="left:1351px;top:104px;width:15px;height:624px;background:#f0f0f0"></div>
<div style="left:1352px;top:121px;width:13px;height:138px;background:#c1c1c1"></div>
<svg style="left:1354px;top:110px" width="10" height="6"><path d="M5 0l4 5H1z" fill="#aaa"/></svg>

<!-- status bar -->
<div style="left:1034px;top:706px;width:332px;height:22px;background:#2b2b2b"></div>
<svg style="left:1039px;top:712px" width="8" height="10"><path d="M2 0h4v5h2L4 10 0 5h2z" fill="#3f9a2e"/></svg>
<div class="st" style="left:1053px">244,5 KB/s</div>
<svg style="left:1118px;top:712px" width="8" height="10"><path d="M2 10h4V5h2L4 0 0 5h2z" fill="#2f9ae0"/></svg>
<div class="st" style="left:1132px">10,78 KB/s</div>
<div class="st" style="left:1193px">RAM 78%</div>
<div class="st" style="left:1251px">CPU</div>
<div style="left:1274px;top:711px;width:23px;height:13px;border:1px solid #ddd;background:#1a9ae0"></div>
<div class="st" style="left:1311px">CPU 96°C</div>

<!-- taskbar -->
<div style="left:0;top:728px;width:1366px;height:40px;background:linear-gradient(90deg,#a6c0dc 0,#a9c3de 80%,#8196ae 83%,#8094ac 100%);border-top:1px solid #111"></div>
<svg style="left:8px;top:729px" width="38" height="38"><defs><radialGradient id="orb" cx=".5" cy=".35" r=".7"><stop offset="0" stop-color="#5ea6d6"/><stop offset="1" stop-color="#0a2f52"/></radialGradient></defs><circle cx="19" cy="19" r="18" fill="url(#orb)" stroke="#24405c"/><path d="M10 11l8-2v8l-8 1z" fill="#e0502a"/><path d="M20 9l8-1v8l-8 1z" fill="#80b83a"/><path d="M10 20l8-1v8l-8 1z" fill="#3a8ed8"/><path d="M20 19l8-1v8l-8 1z" fill="#f0c030"/></svg>
<svg style="left:72px;top:730px" width="36" height="36"><circle cx="17" cy="19" r="10" fill="none" stroke="#2a9ae0" stroke-width="5"/><path d="M9 19h17" stroke="#2a9ae0" stroke-width="4"/><path d="M27 24l-9 3" stroke="#a9c3de" stroke-width="5"/><path d="M4 30C2 24 14 8 32 5c2 0 3 2 1 5" fill="none" stroke="#f0c030" stroke-width="1.800"/></svg>

<div class="bar" style="left:121px"><svg width="32" height="30"><path d="M2 6h12l2 3h14v20H2z" fill="#f3d987" stroke="#c8a850"/><rect x="4" y="2" width="24" height="8" fill="#fbf0c0" stroke="#c8a850"/><rect x="8" y="19" width="16" height="10" fill="#5ab0e0" stroke="#3a88c0"/></svg></div>
<svg style="left:198px;top:735px" width="28" height="26"><rect x="6" y="2" width="19" height="20" fill="#7fb2dc" stroke="#5a90c0"/><rect x="2" y="4" width="19" height="20" fill="#a8cce8" stroke="#5a90c0"/><circle cx="11" cy="14" r="8" fill="#e8701a" stroke="#fff" stroke-width="1"/><path d="M8.500 9.500l7 4.500-7 4.500z" fill="#fff"/></svg>
<div class="bar" style="left:245px"><svg width="32" height="32"><path d="M3 1h19v30H3z" fill="#eef2ea" stroke="#888"/><rect x="4" y="20" width="17" height="10" fill="#6fb83a"/><path d="M8 8v14M11 8v14" stroke="#333"/><path d="M13 13h6M16 10v6" stroke="#333"/><path d="M27 2L17 26" stroke="#e8a020" stroke-width="3"/></svg></div>
<div class="bar" style="left:307px"><svg width="32" height="32"><rect x="8" y="3" width="23" height="18" fill="#333" stroke="#777"/><path d="M10 14l4-1 2-5 3 8 3-6 2 4 4 0" fill="none" stroke="#3fd03f"/><rect x="1" y="8" width="7" height="18" fill="#aaa"/><ellipse cx="18" cy="26" rx="11" ry="3" fill="#bbb"/></svg></div>
<div class="bar" style="left:369px"><svg width="32" height="32"><rect x="1" y="1" width="30" height="20" fill="#fff" stroke="#99a"/><rect x="1" y="1" width="30" height="4" fill="#2040c0"/><path d="M15 12l14 14" stroke="#ddd" stroke-width="4"/><path d="M4 22l9-9" stroke="#e88" stroke-width="2"/><rect x="1" y="28" width="14" height="4" fill="#5a5"/><rect x="15" y="28" width="15" height="4" fill="#bbb"/></svg></div>
<div class="bar" style="left:432px"><svg width="34" height="32"><circle cx="21" cy="12" r="11" fill="#4aa0c0"/><path d="M14 6c5-3 10-2 13 2l-6 3z" fill="#70c050"/><rect x="1" y="10" width="25" height="21" fill="#e88a3a" stroke="#a85a1a"/><path d="M1 15h25M1 20h25M1 25h25M8 10v5M18 10v5M4 15v5M14 15v5M22 15v5M8 20v5M18 20v5M4 25v6M14 25v6M22 25v6" stroke="#fbe0b0"/></svg></div>
<div class="bar" style="left:493px"><svg width="30" height="32"><circle cx="16" cy="16" r="13" fill="#1030a0"/><path d="M4 17c8-6 16-6 24-2" stroke="#6fa8e8" stroke-width="2" fill="none"/><path d="M3 30c6-2 12-9 15-16 2-4 5-7 8-9-1 6 0 12-5 17-4 4-10 5-18 8z" fill="#cfe4f8" stroke="#6fa8e8"/></svg></div>
<div class="bar" style="left:555px;background:linear-gradient(rgba(255,255,255,.65),rgba(255,255,255,.35))"><svg style="left:16px" width="26" height="31"><use href="#brave"/></svg></div>
<div class="bar" style="left:617px"><div style="left:14px;top:4px;width:32px;height:31px;background:#a40e0e;border:1px dotted #400"></div><div style="left:17px;top:6px;width:30px;color:#fff;font-weight:bold;font-style:italic;font-size:23px;line-height:26px">Fz</div></div>
<div class="bar" style="left:679px"><svg style="left:13px" width="32" height="30"><rect x="3" y="5" width="26" height="20" fill="#8fc0d8" stroke="#eee"/><path d="M4 17c6-3 12-3 24 2v5H4z" fill="#3a6a50"/><path d="M1 7V1h6M25 1h6v6M1 23v6h6M25 29h6v-6" fill="none" stroke="#2f7ab8" stroke-width="2.500"/></svg></div>

<!-- tray -->
<svg style="left:1135px;top:745px" width="9" height="6"><path d="M4.500 0L9 5H0z" fill="#f2f2f2"/></svg>
<div style="left:1155px;top:741px;width:17px;height:17px;background:#333"></div>
<svg style="left:1155px;top:741px" width="17" height="17"><path d="M12 3H4v11h8V9H9" fill="none" stroke="#8fd020" stroke-width="1.600" stroke-dasharray="1.500 1"/></svg>
<svg style="left:1186px;top:741px" width="18" height="18"><path d="M2 1v16" stroke="#fff" stroke-width="1.500"/><path d="M3 2h9v7H3z" fill="#fff"/><circle cx="12" cy="12" r="5" fill="#d82020" stroke="#fff"/><path d="M10 10l4 4M14 10l-4 4" stroke="#fff"/></svg>
<svg style="left:1210px;top:741px" width="16" height="18"><path d="M2 3h9v14H2z" fill="none" stroke="#fff" stroke-width="1.500"/><path d="M6 7h8v4l-2 2H8l-2-2zM8 3v4M12 3v4" fill="#fff" stroke="#fff"/></svg>
<svg style="left:1235px;top:741px" width="18" height="18"><path d="M5 6h11v9H5z" fill="none" stroke="#fff" stroke-width="1.500"/><path d="M9 17h6" stroke="#fff" stroke-width="1.500"/><path d="M2 1v10M4 1v10M0 4h6v3H0z" fill="#fff" stroke="#fff"/></svg>
<svg style="left:1258px;top:741px" width="17" height="18"><path d="M1 6h4l4-4v14l-4-4H1z" fill="#eee" stroke="#bbb"/><path d="M11 6a4 4 0 010 6M13 4a7 7 0 010 10" fill="none" stroke="#eee" stroke-width="1.200"/></svg>
<div style="left:1289px;top:734px;width:50px;text-align:center;color:#f0f0f0;font-size:11.500px;line-height:14px">13:58</div>
<div style="left:1284px;top:751px;width:60px;text-align:center;color:#f0f0f0;font-size:11.500px;line-height:14px">21.03.2017</div>
<div style="left:1352px;top:729px;width:14px;height:39px;border:1px solid #5a6a7c;background:linear-gradient(#8a9cb0,#6a7c90);border-radius:2px"></div>
</body></html>
